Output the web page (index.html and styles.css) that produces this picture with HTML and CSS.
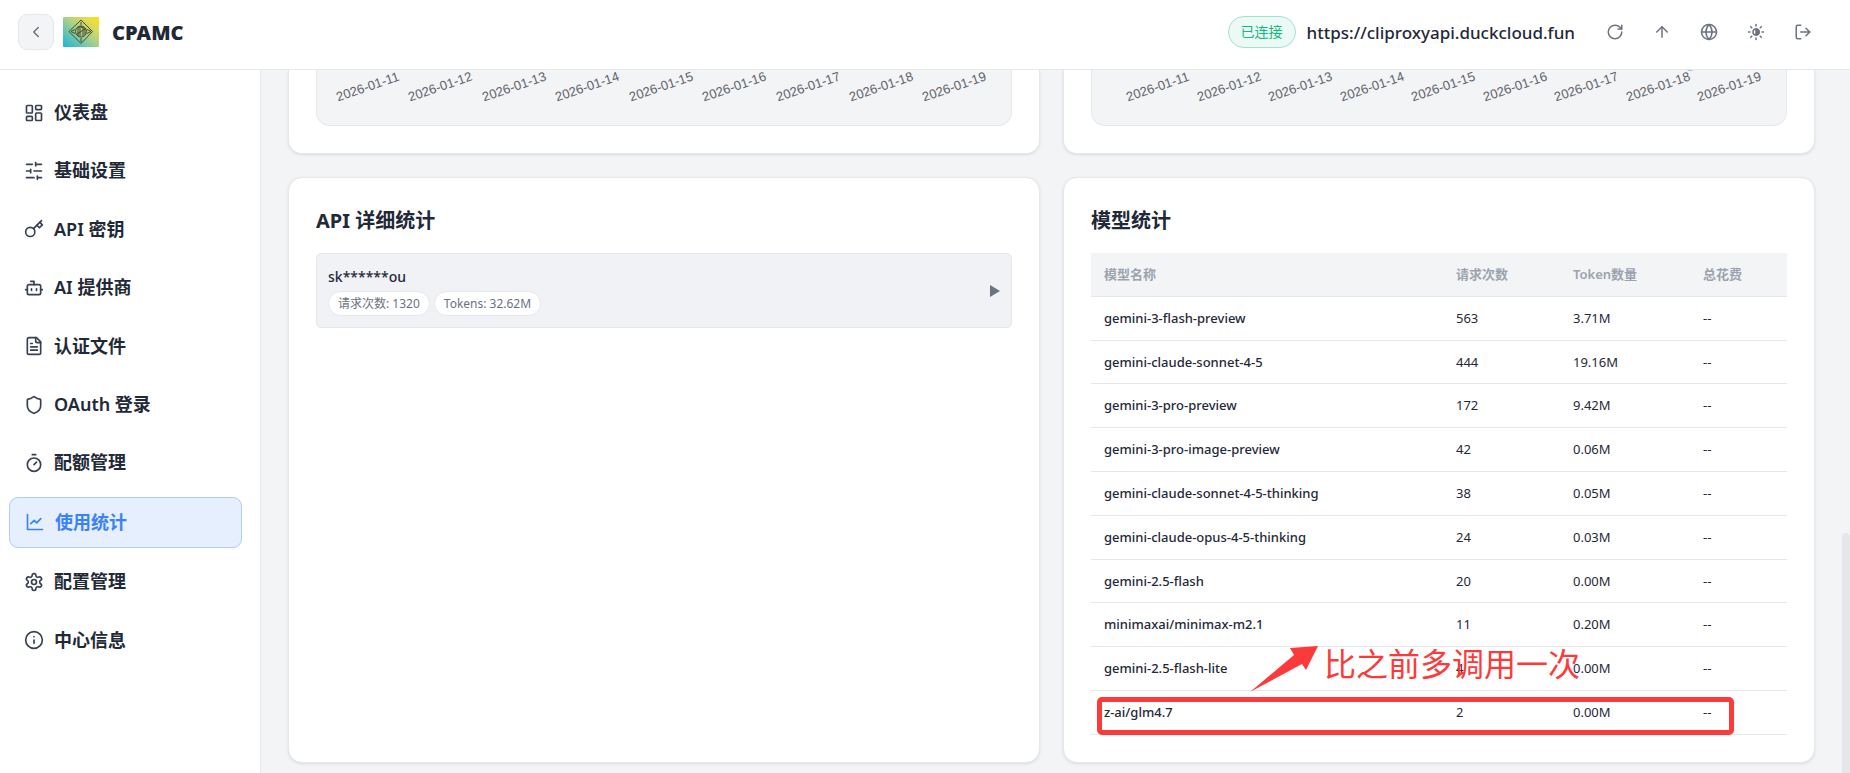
FILE: index.html
```html
<!DOCTYPE html>
<html lang="zh-CN">
<head>
<meta charset="UTF-8" />
<meta name="viewport" content="width=device-width, initial-scale=1" />
<title>CPAMC - 使用统计</title>
<link rel="stylesheet" href="styles.css">
</head>
<body>

<header class="topbar">
  <button class="back-btn" aria-label="收起侧边栏">
    <svg class="icon-sm" viewBox="0 0 24 24"><path d="m15 18-6-6 6-6"/></svg>
  </button>
  <svg class="logo" viewBox="0 0 36 30">
    <defs>
      <linearGradient id="logo-bg" x1="0" y1="1" x2="1" y2="0">
        <stop offset="0" stop-color="#16b4e4"/>
        <stop offset="0.5" stop-color="#a3d08c"/>
        <stop offset="0.8" stop-color="#e4dc50"/>
        <stop offset="1" stop-color="#ffe000"/>
      </linearGradient>
    </defs>
    <rect width="36" height="30" rx="1" fill="url(#logo-bg)"/>
    <g fill="none" stroke="#4a4a30" stroke-width="1">
      <path d="M18 3 29.500 14.500 18 26.500 6 14.500Z"/>
      <path d="M18 5v3M18 21v4M8 14.500l4-2M28 14.500l-4-2M8 14.500l4 2M28 14.500l-4 2"/>
      <circle cx="18" cy="14.500" r="5.500"/>
      <path d="M15 19v-7c0-3 5-3 5 0v7M13 12c2-3 8-3 9 1M17 11v8M22 11v7M14 17l8-5"/>
    </g>
  </svg>
  <span class="brand">CPAMC</span>

  <span class="status">已连接</span>
  <span class="server">https://cliproxyapi.duckcloud.fun</span>
  <div class="actions">
    <button aria-label="刷新">
      <svg class="icon-sm" viewBox="0 0 24 24"><path d="M21 12a9 9 0 1 1-9-9c2.520 0 4.930 1 6.740 2.740L21 8"/><path d="M21 3v5h-5"/></svg>
    </button>
    <button aria-label="检查更新">
      <svg class="icon-sm" viewBox="0 0 24 24"><path d="m5 12 7-7 7 7"/><path d="M12 19V5"/></svg>
    </button>
    <button aria-label="语言">
      <svg class="icon-sm" viewBox="0 0 24 24"><circle cx="12" cy="12" r="10"/><path d="M12 2a14.500 14.500 0 0 0 0 20 14.500 14.500 0 0 0 0-20"/><path d="M2 12h20"/></svg>
    </button>
    <button aria-label="主题">
      <svg class="icon-sm" viewBox="0 0 24 24"><circle cx="12" cy="12" r="4"/><path d="M12 8a4 4 0 0 1 0 8z" fill="currentColor"/><path d="M12 2v2M12 20v2M4.930 4.930l1.410 1.410M17.660 17.660l1.410 1.410M2 12h2M20 12h2M6.340 17.660l-1.410 1.410M19.070 4.930l-1.410 1.410"/></svg>
    </button>
    <button aria-label="退出登录">
      <svg class="icon-sm" viewBox="0 0 24 24"><path d="M9 21H5a2 2 0 0 1-2-2V5a2 2 0 0 1 2-2h4"/><path d="m16 17 5-5-5-5"/><path d="M21 12H9"/></svg>
    </button>
  </div>
</header>

<div class="layout">
  <nav class="sidebar">
    <a href="#dashboard">
      <svg class="icon" viewBox="0 0 24 24"><rect x="3" y="3" width="7" height="9" rx="1"/><rect x="14" y="3" width="7" height="5" rx="1"/><rect x="14" y="12" width="7" height="9" rx="1"/><rect x="3" y="16" width="7" height="5" rx="1"/></svg>
      仪表盘
    </a>
    <a href="#settings">
      <svg class="icon" viewBox="0 0 24 24"><path d="M21 4h-7M10 4H3M21 12h-9M8 12H3M21 20h-5M12 20H3M14 2v4M8 10v4M16 18v4"/></svg>
      基础设置
    </a>
    <a href="#api-keys">
      <svg class="icon" viewBox="0 0 24 24"><circle cx="7.500" cy="15.500" r="5.500"/><path d="m21 2-9.600 9.600"/><path d="m15.500 7.500 3 3L22 7l-3-3"/></svg>
      API 密钥
    </a>
    <a href="#ai-providers">
      <svg class="icon" viewBox="0 0 24 24"><path d="M12 8V4H8"/><rect x="4" y="8" width="16" height="12" rx="2"/><path d="M2 14h2M20 14h2M15 13v2M9 13v2"/></svg>
      AI 提供商
    </a>
    <a href="#auth-files">
      <svg class="icon" viewBox="0 0 24 24"><path d="M15 2H6a2 2 0 0 0-2 2v16a2 2 0 0 0 2 2h12a2 2 0 0 0 2-2V7Z"/><path d="M14 2v4a2 2 0 0 0 2 2h4M10 9H8M16 13H8M16 17H8"/></svg>
      认证文件
    </a>
    <a href="#oauth">
      <svg class="icon" viewBox="0 0 24 24"><path d="M20 13c0 5-3.500 7.500-7.660 8.950a1 1 0 0 1-.67-.01C7.500 20.500 4 18 4 13V6a1 1 0 0 1 1-1c2 0 4.500-1.200 6.240-2.720a1.170 1.170 0 0 1 1.520 0C14.510 3.810 17 5 19 5a1 1 0 0 1 1 1z"/></svg>
      OAuth 登录
    </a>
    <a href="#quota">
      <svg class="icon" viewBox="0 0 24 24"><path d="M10 2h4M12 14l3-3"/><circle cx="12" cy="14" r="8"/></svg>
      配额管理
    </a>
    <a href="#usage" class="active">
      <svg class="icon" viewBox="0 0 24 24"><path d="M3 3v18h18"/><path d="m7 14 4-4 3 3 5-5"/></svg>
      使用统计
    </a>
    <a href="#config">
      <svg class="icon" viewBox="0 0 24 24"><path d="M12.220 2h-.44a2 2 0 0 0-2 2v.18a2 2 0 0 1-1 1.730l-.43.25a2 2 0 0 1-2 0l-.15-.08a2 2 0 0 0-2.730.73l-.22.38a2 2 0 0 0 .73 2.730l.15.1a2 2 0 0 1 1 1.720v.51a2 2 0 0 1-1 1.740l-.15.09a2 2 0 0 0-.73 2.730l.22.38a2 2 0 0 0 2.730.73l.15-.08a2 2 0 0 1 2 0l.43.25a2 2 0 0 1 1 1.730V20a2 2 0 0 0 2 2h.44a2 2 0 0 0 2-2v-.18a2 2 0 0 1 1-1.730l.43-.25a2 2 0 0 1 2 0l.15.08a2 2 0 0 0 2.730-.73l.22-.39a2 2 0 0 0-.73-2.730l-.15-.08a2 2 0 0 1-1-1.740v-.5a2 2 0 0 1 1-1.740l.15-.09a2 2 0 0 0 .73-2.730l-.22-.38a2 2 0 0 0-2.730-.73l-.15.08a2 2 0 0 1-2 0l-.43-.25a2 2 0 0 1-1-1.730V4a2 2 0 0 0-2-2z"/><circle cx="12" cy="12" r="3"/></svg>
      配置管理
    </a>
    <a href="#about">
      <svg class="icon" viewBox="0 0 24 24"><circle cx="12" cy="12" r="10"/><path d="M12 16v-4M12 8h.01"/></svg>
      中心信息
    </a>
  </nav>

  <main class="content">
    <div class="grid">
      <section class="card chart-card">
        <div class="chart chart-requests">
          <span>2026-01-11</span>
          <span>2026-01-12</span>
          <span>2026-01-13</span>
          <span>2026-01-14</span>
          <span>2026-01-15</span>
          <span>2026-01-16</span>
          <span>2026-01-17</span>
          <span>2026-01-18</span>
          <span>2026-01-19</span>
        </div>
      </section>

      <section class="card chart-card">
        <div class="chart chart-tokens">
          <span>2026-01-11</span>
          <span>2026-01-12</span>
          <span>2026-01-13</span>
          <span>2026-01-14</span>
          <span>2026-01-15</span>
          <span>2026-01-16</span>
          <span>2026-01-17</span>
          <span>2026-01-18</span>
          <span>2026-01-19</span>
          <i class="point"></i>
        </div>
      </section>

      <section class="card">
        <h2>API 详细统计</h2>
        <button class="api-row">
          <span class="api-info">
            <span class="api-name">sk******ou</span>
            <span class="tags">
              <span class="tag">请求次数: 1320</span>
              <span class="tag">Tokens: 32.62M</span>
            </span>
          </span>
          <svg class="caret" viewBox="0 0 10 12"><path d="M0 0v12l10-6z"/></svg>
        </button>
      </section>

      <section class="card">
        <h2>模型统计</h2>
        <div class="table-wrap">
          <table>
            <thead>
              <tr><th>模型名称</th><th class="col-count">请求次数</th><th class="col-token">Token数量</th><th class="col-cost">总花费</th></tr>
            </thead>
            <tbody>
              <tr><td>gemini-3-flash-preview</td><td>563</td><td>3.71M</td><td>--</td></tr>
              <tr><td>gemini-claude-sonnet-4-5</td><td>444</td><td>19.16M</td><td>--</td></tr>
              <tr><td>gemini-3-pro-preview</td><td>172</td><td>9.42M</td><td>--</td></tr>
              <tr><td>gemini-3-pro-image-preview</td><td>42</td><td>0.06M</td><td>--</td></tr>
              <tr><td>gemini-claude-sonnet-4-5-thinking</td><td>38</td><td>0.05M</td><td>--</td></tr>
              <tr><td>gemini-claude-opus-4-5-thinking</td><td>24</td><td>0.03M</td><td>--</td></tr>
              <tr><td>gemini-2.5-flash</td><td>20</td><td>0.00M</td><td>--</td></tr>
              <tr><td>minimaxai/minimax-m2.1</td><td>11</td><td>0.20M</td><td>--</td></tr>
              <tr><td>gemini-2.5-flash-lite</td><td>4</td><td>0.00M</td><td>--</td></tr>
              <tr><td>z-ai/glm4.7</td><td>2</td><td>0.00M</td><td>--</td></tr>
            </tbody>
          </table>
          <!-- red mark-up over the last rows -->
          <div class="mark-box"></div>
          <svg class="mark-arrow" viewBox="0 0 68 46"><path d="M0 46 44 9 40 2 68 0 56 24 52 18Z"/></svg>
          <div class="mark-text">比之前多调用一次</div>
        </div>
      </section>
    </div>
  </main>
</div>

<div class="scroll-thumb"></div>

</body>
</html>
```

FILE: styles.css
```css
* {
  box-sizing: border-box;
}
body {
  margin: 0;
  height: 100vh;
  display: flex;
  flex-direction: column;
  overflow: hidden;
  font-family: "Noto Sans", "Noto Sans CJK SC", sans-serif;
  color: #1f2937;
  background: #f3f4f6;
}
button {
  font: inherit;
  color: inherit;
  cursor: pointer;
}
svg {
  flex-shrink: 0;
}
.icon, .icon-sm {
  display: block;
  fill: none;
  stroke: currentColor;
  stroke-width: 2;
  stroke-linecap: round;
  stroke-linejoin: round;
}
.icon {
  width: 20px;
  height: 20px;
  color: #374151;
}
.icon-sm {
  width: 18px;
  height: 18px;
}

/* top bar */
.topbar {
  position: relative;
  z-index: 2;
  display: flex;
  align-items: center;
  flex-shrink: 0;
  padding: 14px 29px 19px 18px;
  background: #fff;
  border-bottom: 1px solid #e5e7eb;
}
.back-btn {
  display: flex;
  align-items: center;
  justify-content: center;
  width: 36px;
  height: 36px;
  padding: 0;
  border: 1px solid #e5e7eb;
  border-radius: 9px;
  background: #f3f4f6;
  color: #6b7280;
}
.logo {
  width: 36px;
  height: 30px;
  margin: 0 13px 0 9px;
}
.brand {
  font-size: 20px;
  font-weight: 900;
}
.status {
  margin-left: auto;
  padding: 0 12px;
  line-height: 30px;
  font-size: 14px;
  color: #10b981;
  background: #ecfaf5;
  border: 1px solid #9fe3cb;
  border-radius: 16px;
}
.server {
  margin: 0 22px 0 11px;
  font-size: 17px;
  font-weight: 500;
}
.actions {
  display: flex;
  gap: 11px;
}
.actions button {
  display: flex;
  align-items: center;
  justify-content: center;
  width: 36px;
  height: 36px;
  padding: 0;
  border: none;
  background: none;
  color: #6b7280;
}

/* sidebar */
.layout {
  display: flex;
  flex: 1;
  min-height: 0;
}
.sidebar {
  display: flex;
  flex-direction: column;
  gap: 9px;
  flex-shrink: 0;
  width: 261px;
  padding: 18px 18px 18px 9px;
  background: #fff;
  border-right: 1px solid #e5e7eb;
}
.sidebar a {
  display: flex;
  align-items: center;
  gap: 10px;
  padding: 13px 15px;
  border-radius: 9px;
  font-size: 18px;
  line-height: 1.3;
  font-weight: 600;
  color: #1f2937;
  text-decoration: none;
}
.sidebar a.active {
  color: #3b82f6;
  background: #e6effe;
  border: 1px solid #b1cdfb;
}
.sidebar a.active .icon {
  color: #3b82f6;
}

/* content */
.content {
  flex: 1;
  min-width: 0;
  padding: 0 35px 0 27px;
}
.grid {
  display: grid;
  grid-template-columns: 1fr 1fr;
  gap: 23px;
}
.card {
  padding: 27px;
  background: #fff;
  border: 1px solid #e5e7eb;
  border-radius: 14px;
  box-shadow: 0 1px 3px rgba(0,0,0,0.1);
}
.chart-card {
  padding-top: 0;
  border-top: none;
  border-radius: 0 0 14px 14px;
}
.chart {
  position: relative;
  display: flex;
  justify-content: space-between;
  padding: 8px 23px 29px 18px;
  background: #f3f4f6;
  border: 1px solid #e5e7eb;
  border-top: none;
  border-radius: 0 0 14px 14px;
  font-family: "Liberation Sans", sans-serif;
  font-size: 13px;
  line-height: 18px;
  color: #5f6269;
}
.chart-tokens {
  padding-left: 33px;
}
.chart span {
  transform: rotate(-19deg);
}
.point {
  position: absolute;
  top: -7px;
  right: 92px;
  width: 8px;
  height: 8px;
  border-radius: 50%;
  background: #8bb8ff;
}
h2 {
  margin: 0 0 16px;
  font-size: 20px;
  line-height: 32px;
  font-weight: 700;
}

/* api row */
.api-row {
  display: flex;
  align-items: center;
  justify-content: space-between;
  width: 100%;
  padding: 11px;
  text-align: left;
  background: #f1f2f6;
  border: 1px solid #e5e7eb;
  border-radius: 5px;
}
.api-name {
  display: block;
  margin-bottom: 2px;
  font-size: 14px;
  line-height: 24px;
  font-weight: 500;
}
.tags {
  display: flex;
  gap: 4px;
}
.tag {
  padding: 0 9px;
  font-size: 12px;
  line-height: 23px;
  color: #6b7280;
  background: #fff;
  border: 1px solid #e5e7eb;
  border-radius: 13px;
}
.caret {
  width: 10px;
  height: 12px;
  fill: #6b7280;
}

/* model table */
.table-wrap {
  position: relative;
}
table {
  width: 100%;
  table-layout: fixed;
  border-collapse: separate;
  border-spacing: 0;
  font-size: 13px;
  line-height: 1.6;
}
th, td {
  padding: 11px 13px;
  text-align: left;
  border-bottom: 1px solid #e5e7eb;
}
th {
  font-weight: 600;
  color: #9ca3af;
  background: #f3f4f6;
}
td:first-child {
  font-weight: 500;
}
.col-count {
  width: 117px;
}
.col-token {
  width: 130px;
}
.col-cost {
  width: 97px;
}

/* mark-up */
.mark-box {
  position: absolute;
  left: 6px;
  right: 53px;
  bottom: 0;
  height: 38px;
  border: 5px solid #fd3a3a;
  border-radius: 5px;
}
.mark-arrow {
  position: absolute;
  left: 159px;
  bottom: 43px;
  width: 68px;
  height: 46px;
  fill: #fd3a3a;
}
.mark-text {
  position: absolute;
  left: 233px;
  bottom: 51px;
  font-size: 32px;
  line-height: 40px;
  font-weight: 400;
  color: #fd3a3a;
  white-space: nowrap;
}

.scroll-thumb {
  position: absolute;
  right: 0;
  bottom: 0;
  width: 8px;
  height: 240px;
  background: #e5e7eb;
  border-radius: 4px 4px 0 0;
}
```
